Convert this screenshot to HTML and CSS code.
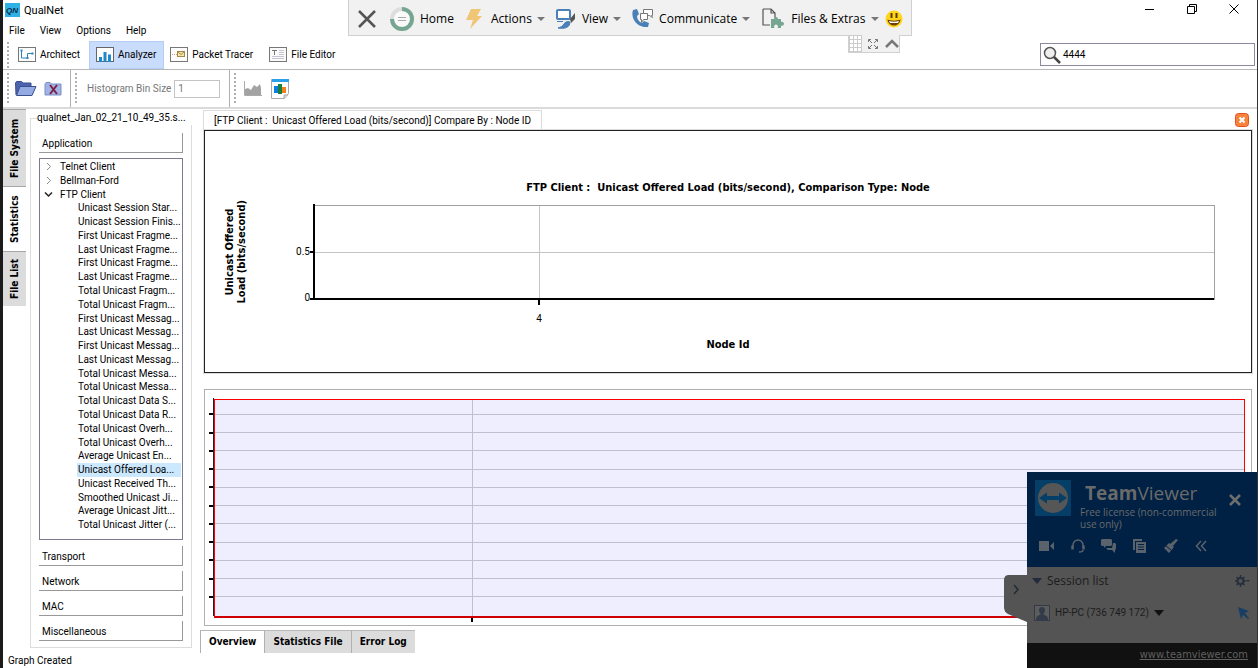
FILE: index.html
```html
<!DOCTYPE html>
<html lang="en">
<head>
<meta charset="utf-8">
<title>QualNet</title>
<link rel="stylesheet" href="styles.css">
</head>
<body>
<div class="app">
  <header class="titlebar">
    <svg class="logo" width="15" height="14" viewBox="0 0 15 14"><rect width="15" height="14" fill="#2fb1e6"/><text class="logo-text" x="1" y="10">QN</text></svg>
    <span class="title">QualNet</span>
    <div class="window-buttons">
      <button aria-label="Minimize"><svg width="12" height="12"><path d="M1 6.5h9" stroke="#000"/></svg></button>
      <button aria-label="Restore"><svg width="12" height="12" fill="none" stroke="#000"><path d="M1.5 3.500h7v7h-7zM3.500 3.500v-2h7v7h-2"/></svg></button>
      <button aria-label="Close"><svg width="12" height="12" stroke="#000"><path d="M1.500 1.500l9 9M10.500 1.500l-9 9"/></svg></button>
    </div>
  </header>
  <nav class="menubar">
    <button>File</button><button>View</button><button>Options</button><button>Help</button>
  </nav>
  <div class="modebar">
    <span class="grip"></span>
    <button class="mode"><svg width="18" height="16" fill="none"><rect x=".5" y=".5" width="17" height="14" fill="#fdfdfd" stroke="#777"/><path d="M3.500 3v8h6M9.500 11V6.500h5" stroke="#2d84bd"/><path d="M2.500 2.500h2v2h-2zM8.500 10h2v2h-2zM13.500 5.500h2v2h-2z" fill="#2d84bd"/></svg>Architect</button>
    <button class="mode mode-on"><svg width="18" height="16"><rect x=".5" y=".5" width="17" height="14" fill="#fdfdfd" stroke="#666"/><path d="M3 10h3v5H3zM7.500 5h3v10h-3zM12 7.500h3V15h-3z" fill="#1e88c9"/></svg>Analyzer</button>
    <button class="mode mode-packet"><svg width="18" height="16" fill="none"><rect x=".5" y=".5" width="17" height="14" fill="#fdfdfd" stroke="#777"/><path d="M2 7.500h5" stroke="#e79a8b" stroke-dasharray="1 1"/><rect x="7.500" y="4.500" width="7" height="5" fill="#f5e6a8" stroke="#a08a4a"/><path d="M8 5l3 2.500L14 5" stroke="#a08a4a"/></svg>Packet Tracer</button>
    <button class="mode mode-editor"><svg width="18" height="16" fill="none"><rect x=".5" y=".5" width="17" height="14" fill="#fafafa" stroke="#777"/><path d="M3 3.500h5M5.500 3v5" stroke="#777"/><path d="M10 3.500h5M10 5.500h5M10 7.500h5M3 9.500h12M3 11.500h12" stroke="#c5c5d5"/></svg>File Editor</button>
    <label class="search">
      <svg width="18" height="18" fill="none"><circle cx="7" cy="7" r="5.500" fill="#eee" stroke="#555" stroke-width="1.500"/><path d="M11 11l6 6" stroke="#444" stroke-width="2.500"/></svg>
      <input type="text" value="4444" aria-label="Search">
    </label>
  </div>
  <div class="toolbar">
    <div class="tools tools-files">
      <span class="grip"></span>
      <button aria-label="Open"><svg width="23" height="18" stroke="#3b4f8f"><path d="M2 15L1.500 3l1-1.500h5L9 3h8v3" fill="#4b64ad"/><path d="M2.500 15.500L6 6.500h16l-4 9z" fill="#94aae2"/></svg></button>
      <button aria-label="Close file"><svg width="18" height="16"><path d="M1 14V3l1-1.500h4L7.500 3H17v11z" fill="#9fb3e6" stroke="#7a8fc8"/><path d="M6 4l7 9M13 4l-7 9" stroke="#7d2043" stroke-width="2"/></svg></button>
    </div>
    <div class="tools tools-bin">
      <span class="grip"></span>
      <label class="bin">Histogram Bin Size <input type="text" value="1" disabled></label>
    </div>
    <div class="tools tools-chart">
      <span class="grip"></span>
      <button aria-label="Area chart"><svg width="19" height="17"><path d="M1.500 1v14.500H19" fill="none" stroke="#aaa"/><path d="M2 15V9l3-1 3 2 3-5 3 2 3-3 1 4v7z" fill="#a3a3a3"/></svg></button>
      <button aria-label="Report"><svg width="19" height="20"><path d="M.5.5h17v14l-4 5H.5z" fill="#fff" stroke="#aaa"/><path d="M1 0h17v3H1z" fill="#2aa0e8"/><path d="M3 7h4v7H3z" fill="#0a7fe0"/><path d="M7 5h4v10H7z" fill="#188038"/><path d="M11 8h4v6h-4z" fill="#f08020"/><path d="M13 19v-3h4" fill="#ddd" stroke="#aaa"/></svg></button>
    </div>
  </div>
  <div class="workspace">
    <nav class="sidetabs">
      <button class="sidetab tab-system">File System</button>
      <button class="sidetab tab-stats sidetab-on">Statistics</button>
      <button class="sidetab tab-list">File List</button>
    </nav>
    <fieldset class="group">
      <legend>qualnet_Jan_02_21_10_49_35.s...</legend>
      <button class="section">Application</button>
      <ul class="tree">
        <li class="node"><svg width="9" height="9"><path d="M3 1l3.500 3.500L3 8"/></svg>Telnet Client</li>
        <li class="node"><svg width="9" height="9"><path d="M3 1l3.500 3.500L3 8"/></svg>Bellman-Ford</li>
        <li class="node node-open"><svg width="9" height="9"><path d="M1 2.500L4.500 6 8 2.500"/></svg>FTP Client</li>
        <li class="leaf">Unicast Session Star...</li>
        <li class="leaf">Unicast Session Finis...</li>
        <li class="leaf">First Unicast Fragme...</li>
        <li class="leaf">Last Unicast Fragme...</li>
        <li class="leaf">First Unicast Fragme...</li>
        <li class="leaf">Last Unicast Fragme...</li>
        <li class="leaf">Total Unicast Fragm...</li>
        <li class="leaf">Total Unicast Fragm...</li>
        <li class="leaf">First Unicast Messag...</li>
        <li class="leaf">Last Unicast Messag...</li>
        <li class="leaf">First Unicast Messag...</li>
        <li class="leaf">Last Unicast Messag...</li>
        <li class="leaf">Total Unicast Messa...</li>
        <li class="leaf">Total Unicast Messa...</li>
        <li class="leaf">Total Unicast Data S...</li>
        <li class="leaf">Total Unicast Data R...</li>
        <li class="leaf">Total Unicast Overh...</li>
        <li class="leaf">Total Unicast Overh...</li>
        <li class="leaf">Average Unicast En...</li>
        <li class="leaf leaf-on">Unicast Offered Loa...</li>
        <li class="leaf">Unicast Received Th...</li>
        <li class="leaf">Smoothed Unicast Ji...</li>
        <li class="leaf">Average Unicast Jitt...</li>
        <li class="leaf">Total Unicast Jitter (...</li>
      </ul>
      <button class="section">Transport</button>
      <button class="section">Network</button>
      <button class="section">MAC</button>
      <button class="section">Miscellaneous</button>
    </fieldset>
    <main class="main">
      <div class="chart-tabs">
        <button class="chart-tab">[FTP Client :&nbsp; Unicast Offered Load (bits/second)] Compare By : Node ID</button>
        <button class="chart-close" aria-label="Close chart"><svg width="14" height="14"><rect x=".5" y=".5" width="13" height="13" rx="3" fill="#f8833c" stroke="#e8501a"/><path d="M4.500 4.500l5 5M9.500 4.500l-5 5" stroke="#fff" stroke-width="2"/></svg></button>
      </div>
      <section class="chart">
        <h2 class="chart-title">FTP Client :&nbsp; Unicast Offered Load (bits/second), Comparison Type: Node</h2>
        <div class="y-title">Unicast Offered<br>Load (bits/second)</div>
        <svg class="plot">
          <g stroke="#c4c4c4"><line x1="25%" x2="25%" y1="0" y2="100%"/><line x1="0" x2="100%" y1="50%" y2="50%"/></g>
          <rect width="100%" height="100%" fill="none" stroke="#a0a0a0"/>
          <g stroke="#000" stroke-width="2"><line x1="0" x2="0" y1="-1" y2="100%"/><line x1="0" x2="100%" y1="100%" y2="100%"/><line x1="-4" x2="0" y1="50%" y2="50%"/><line x1="-4" x2="0" y1="100%" y2="100%"/></g>
          <svg x="25%" y="100%" class="tick"><path d="M0 0v6" stroke="#000" stroke-width="2"/></svg>
          <text x="0" y="50%" dx="-4" dy="3" text-anchor="end">0.5</text>
          <text x="0" y="100%" dx="-4" dy="2" text-anchor="end">0</text>
          <text x="25%" y="100%" dy="23" text-anchor="middle">4</text>
        </svg>
        <div class="x-title">Node Id</div>
      </section>
      <section class="overview">
        <svg class="plot plot-framed">
          <g stroke="#c0c0cc"><line x2="100%" y1="6.700%" y2="6.700%"/><line x2="100%" y1="15.100%" y2="15.100%"/><line x2="100%" y1="23.600%" y2="23.600%"/><line x2="100%" y1="32%" y2="32%"/><line x2="100%" y1="40.500%" y2="40.500%"/><line x2="100%" y1="48.900%" y2="48.900%"/><line x2="100%" y1="57.300%" y2="57.300%"/><line x2="100%" y1="65.800%" y2="65.800%"/><line x2="100%" y1="74.200%" y2="74.200%"/><line x2="100%" y1="82.700%" y2="82.700%"/><line x2="100%" y1="91.100%" y2="91.100%"/><line x1="25%" x2="25%" y2="100%"/></g>
          <g stroke="#000" stroke-width="2"><line x1="-6" x2="-1" y1="6.700%" y2="6.700%"/><line x1="-6" x2="-1" y1="15.100%" y2="15.100%"/><line x1="-6" x2="-1" y1="23.600%" y2="23.600%"/><line x1="-6" x2="-1" y1="32%" y2="32%"/><line x1="-6" x2="-1" y1="40.500%" y2="40.500%"/><line x1="-6" x2="-1" y1="48.900%" y2="48.900%"/><line x1="-6" x2="-1" y1="57.300%" y2="57.300%"/><line x1="-6" x2="-1" y1="65.800%" y2="65.800%"/><line x1="-6" x2="-1" y1="74.200%" y2="74.200%"/><line x1="-6" x2="-1" y1="82.700%" y2="82.700%"/><line x1="-6" x2="-1" y1="91.100%" y2="91.100%"/></g>
          <svg x="25%" y="100%" class="tick"><path d="M0 2v4" stroke="#000" stroke-width="2"/></svg>
          <line x1="-1.500" x2="-1.500" y1="-2" y2="100%" stroke="#222"/>
        </svg>
      </section>
      <nav class="bottom-tabs">
        <button class="bottom-tab bottom-on">Overview</button>
        <button class="bottom-tab">Statistics File</button>
        <button class="bottom-tab">Error Log</button>
      </nav>
    </main>
  </div>
  <footer class="status">Graph Created</footer>
</div>

<div class="remote">
  <div class="remote-bar">
    <button aria-label="Close session"><svg width="20" height="20" stroke="#555" stroke-width="2.500"><path d="M2 2l16 16M18 2L2 18"/></svg></button>
    <button class="r-home"><svg width="26" height="26" fill="none"><circle cx="13" cy="13" r="10" fill="#fafafa" stroke="#ddd" stroke-width="4"/><path d="M13 3a10 10 0 1 1-10 10" stroke="#76a692" stroke-width="4"/><path d="M9 11.500h8M9 14.500h8" stroke="#aaa"/></svg>Home</button>
    <button class="r-actions"><svg width="16" height="20"><path d="M5 0h10l-4 7h5L4 20l3-9H0z" fill="#f0c575"/></svg>Actions<i class="caret"></i></button>
    <button class="r-view"><svg width="22" height="20" fill="none"><rect x="2" y="1" width="13" height="9" rx="1" fill="#fff" stroke="#4a80b8" stroke-width="2"/><path d="M15 10l5-6v6l-4 4z" fill="#555"/><path d="M2 12.500h6M3 19c6 1 12 0 12-6-3-1-5 0-6 2s-3 3-6 4z" fill="#4a80b8" stroke="#4a80b8"/></svg>View<i class="caret"></i></button>
    <button class="r-comm"><svg width="23" height="21" fill="none"><path d="M2 2c-3 9 5 18 15 17l1-4-5-2-2 2c-3-1-5-4-5-7l2-2-2-5z" fill="#4a80b8"/><path d="M12.500 1.500h9v6h-1l1 2-3-2h-6z" fill="#fff" stroke="#777"/><path d="M9.500 5.500h7v6h-4l-2 3v-3h-1z" fill="#fff" stroke="#777"/></svg>Communicate<i class="caret"></i></button>
    <button class="r-files"><svg width="24" height="21" fill="none"><path d="M1 1h8l4 4v5M1 1v16h7M9 1v4h4" stroke="#555" stroke-width="1.200"/><path d="M9 20v-9h3a2 2 0 1 1 4 0h3v3a2 2 0 1 1 0 3.500V20h-3.500a2 2 0 1 0-3 0z" fill="#76a692"/></svg>Files &amp; Extras<i class="caret"></i></button>
    <button class="r-smile" aria-label="Feedback"><svg width="18" height="18"><circle cx="9" cy="9" r="8.500" fill="#ffd51c"/><path d="M6.500 3v5M11.500 3v5" stroke="#5a3a00" stroke-width="2"/><path d="M2.500 9.500c3 1.500 10 1.500 13 0-1 8-12 8-13 0z" fill="#6b4100"/><path d="M4 11c3 1 7 1 10 0l-1 2H5z" fill="#fff"/></svg></button>
  </div>
  <div class="remote-sub">
    <span class="dots"></span>
    <button aria-label="Full screen"><svg width="12" height="12" fill="none" stroke="#777"><path d="M1.500 4V1.500H4M8 1.500h2.500V4M10.500 8v2.500H8M4 10.500H1.500V8M2 2l3 3M10 2L7 5M10 10L7 7M2 10l3-3"/></svg></button>
    <button aria-label="Collapse"><svg width="16" height="10" fill="none" stroke="#777" stroke-width="2.500"><path d="M2 8l6-6 6 6"/></svg></button>
  </div>
</div>

<aside class="tv">
  <button class="tv-handle" aria-label="Collapse panel"><svg width="23" height="47" fill="none"><path d="M23 0H5Q0 0 0 5v27q0 5 4 7l19 8z" fill="#545454"/><path d="M10 10l4 4.500-4 4.500" stroke="#222a33" stroke-width="1.500"/></svg></button>
  <div class="tv-head">
    <svg class="tv-logo" width="36" height="36"><rect width="36" height="36" rx="1" fill="#053f68"/><circle cx="18" cy="18" r="15" fill="#565656"/><path d="M4 18l8-5.500v3.500h12v-3.500l8 5.500-8 5.500V20H12v3.500z" fill="#053f68"/></svg>
    <div class="tv-name"><h1><b>Team</b>Viewer</h1><p>Free license (non-commercial use only)</p></div>
    <button class="tv-close" aria-label="Close"><svg width="12" height="12" stroke="#6e6e6e" stroke-width="2.500"><path d="M1 1l10 10M11 1L1 11"/></svg></button>
    <div class="tv-tools">
      <button aria-label="Video"><svg width="16" height="14" fill="#5a626b"><path d="M0 2h10v10H0zM11 7l4-4v8z"/></svg></button>
      <button aria-label="Audio"><svg width="16" height="14" fill="none" stroke="#5a626b" stroke-width="1.500"><path d="M3 8V6a5 5 0 0 1 10 0v2M13 11c0 2-2 2-4 2"/><path d="M2.500 6.500v4M13.500 6.500v4" stroke-width="2.500"/></svg></button>
      <button aria-label="Chat"><svg width="16" height="14" fill="#5a626b"><path d="M1 0h9l1 1v5l-1 1H5L3 9V7H1L0 6V1zM12 4h2l1 1v5l-1 1v3l-3-3H7L5 9h6z"/></svg></button>
      <button aria-label="Files"><svg width="16" height="14" fill="#5a626b"><path d="M1 0h9v2H3v9H1z"/><path d="M4 3h10v11H4z"/><path d="M6 5.500h6M6 8h6M6 10.500h6" stroke="#002144"/></svg></button>
      <button aria-label="Whiteboard"><svg width="16" height="14" fill="#5a626b"><path d="M13 0l2 1-5 6-3-2zM6 4l5 4-5 6-5-5z"/><path d="M3 7l5 4" stroke="#002144"/></svg></button>
      <button aria-label="Less"><svg width="16" height="14" fill="none" stroke="#5a626b" stroke-width="1.500"><path d="M7 2L2.500 7 7 12M12 2L7.500 7l4.500 5"/></svg></button>
    </div>
  </div>
  <div class="tv-body">
    <div class="tv-row"><i class="tri tri-blue"></i><span class="tv-list">Session list</span><button aria-label="Settings"><svg width="15" height="12"><circle cx="5.500" cy="6" r="3" fill="none" stroke="#26303c" stroke-width="2"/><path d="M5.500 0v3M5.500 9v3M0 6h3M8 6h3M1.500 2l2 2M7.500 8l2 2M9.500 2l-2 2M3.500 8l-2 2" stroke="#26303c" stroke-width="1.500"/><path d="M11 5h4l-2 2z" fill="#26303c"/></svg></button></div>
    <div class="tv-row tv-peer"><svg width="16" height="16"><rect x=".5" y=".5" width="15" height="15" fill="#5c5c5c" stroke="#333a48"/><path d="M5 5c0-4 6-4 6 0 0 2-1 4-2 4.500 3 1 5 1.500 5 5.500H2c0-4 2-4.500 5-5.500C6 9 5 7 5 5z" fill="#333a48"/></svg><span>HP-PC (736 749 172)</span><i class="tri"></i><button aria-label="Pointer"><svg width="12" height="12" fill="#173f63"><path d="M0 0l11 4-4 2 4 5-1 1-5-4-2 4z"/></svg></button></div>
  </div>
  <div class="tv-foot"><a href="#">www.teamviewer.com</a></div>
</aside>
</body>
</html>
```
FILE: styles.css
```css
* { box-sizing: border-box; }
body { margin: 0; background: #fff; color: #000; font: 10px/14px Roboto, sans-serif; }
button { font: inherit; color: inherit; background: none; border: 0; padding: 0; margin: 0; display: flex; align-items: center; white-space: nowrap; }
input { font: inherit; color: inherit; min-width: 0; }
svg { display: block; flex: none; }
h1, h2, p, ul { margin: 0; padding: 0; }

.app { min-height: 100vh; display: flex; flex-direction: column; border-left: 3px solid #1b1b1b; border-right: 1px solid #333; }
.titlebar { display: flex; align-items: flex-start; height: 22px; padding: 3px 17px 0 2px; }
.logo-text { font: italic bold 8px "Liberation Sans", sans-serif; fill: #0b2a4a; }
.title { margin-left: 4px; font-size: 11px; line-height: 16px; }
.window-buttons { margin-left: auto; display: flex; gap: 30px; }
.menubar { display: flex; gap: 15px; height: 18px; padding-left: 6px; }

.modebar { display: flex; align-items: center; height: 30px; padding: 0 2px 0 4px; border-bottom: 1px solid #b8b8b8; }
.grip { flex: none; width: 2px; height: 26px; background: repeating-linear-gradient(#b0b0b0 0 2px, transparent 2px 4px); }
.mode { gap: 4px; height: 28px; padding: 1px 9px 0; }
.mode-on { background: #c9dcfb; border: 1px solid #b4cdf5; padding: 0 7px 0 6px; }
.mode-packet { padding: 1px 7px 0 6px; }
.search { display: flex; align-items: center; gap: 2px; width: 215px; height: 23px; margin-left: auto; padding: 0 2px; border: 1px solid #8a8aa0; }
.search input { flex: 1; border: 0; padding: 0; outline: 0; }

.toolbar { display: flex; height: 39px; border-bottom: 2px solid #dadada; }
.tools { display: flex; align-items: center; gap: 7px; padding-left: 4px; border-right: 1px solid #b0b0b0; }
.tools .grip { height: 32px; margin-right: -2px; }
.tools-files { width: 68px; }
.tools-bin { width: 159px; }
.tools-chart { border: 0; gap: 9px; }
.bin { display: flex; align-items: center; gap: 3px; margin-left: 5px; color: #777; white-space: nowrap; }
.bin input { width: 46px; height: 18px; padding: 0 3px; background: #fff; border: 1px solid #c4c4c4; color: #777; }

.workspace { flex: 1; display: flex; }
.sidetabs { width: 23px; }
.sidetab { width: 23px; justify-content: center; writing-mode: vertical-rl; transform: rotate(180deg); background: #dcdcdc; border-bottom: 1px solid #a8a8a8; font: bold 10px/14px "DejaVu Sans Condensed", "DejaVu Sans", sans-serif; }
.tab-system { height: 77px; }
.tab-stats { height: 65px; }
.tab-list { height: 55px; }
.sidetab-on { background: #fff; }

.group { display: flex; flex-direction: column; gap: 6px; width: 162px; min-width: 0; margin: 2px 0 5px 4px; padding: 8px 8px 7px; border: 1px solid #dcdcdc; }
.group legend { margin-left: -2px; padding: 0; width: 155px; white-space: nowrap; }
.section { height: 20px; padding: 2px 0 0 3px; border-right: 1px solid #999; border-bottom: 1px solid #999; margin-bottom: -1px; }
.tree { flex: 1; display: grid; grid-auto-rows: 1fr; grid-template-columns: minmax(0, 1fr); padding: 1px 1px 7px; border: 1px solid #7a7a90; list-style: none; }
.tree li { line-height: 13px; white-space: nowrap; min-height: 0; }
.node { display: flex; align-items: center; gap: 7px; padding-left: 3px; }
.node path { fill: none; stroke: #888; }
.node-open path { stroke: #222; stroke-width: 1.5; }
.leaf { margin-left: 36px; padding-left: 1px; }
.leaf-on { background: #cce8ff; }

.main { flex: 1; min-width: 0; display: flex; flex-direction: column; padding: 1px 5px 0 9px; }
.chart-tabs { display: flex; align-items: center; justify-content: space-between; height: 20px; margin-left: 2px; padding-right: 3px; }
.chart-tab { height: 20px; padding: 0 10px; border: 1px solid #dcdcdc; border-bottom: 0; }
.chart, .overview { margin-left: 3px; min-height: 0; }
.chart { flex: 241 1 0; display: grid; grid-template: 74px minmax(0, 1fr) 73px / 109px minmax(0, 1fr) 37px; border: 1px solid #222; outline: 1px solid #dcdcdc; }
.chart-title { grid-column: 1 / 4; align-self: end; padding-bottom: 10px; text-align: center; }
.chart-title, .x-title, .y-title { font: bold 11px/14px "DejaVu Sans Condensed", "DejaVu Sans", sans-serif; }
.y-title { writing-mode: vertical-rl; transform: rotate(180deg); place-self: center; margin-right: 47px; line-height: 12px; text-align: center; white-space: nowrap; }
.plot { width: 100%; height: 100%; min-height: 0; overflow: visible; shape-rendering: crispEdges; }
.plot-framed { background: #eeeeff; border: 1px solid #f00; border-bottom: 2px solid #c00; }
.tick { overflow: visible; }
.x-title { grid-column: 1 / 4; grid-row: 3; align-self: end; padding-bottom: 20px; text-align: center; }
.overview { flex: 219 1 0; margin-top: 16px; padding: 9px 6px 7px 9px; border: 1px solid #b0b0b0; }
.bottom-tabs { display: flex; margin: 4px 0 0 -1px; }
.bottom-tab { height: 23px; padding: 0 8px; background: #dcdcdc; border-top: 1px solid #b8b8b8; border-left: 1px solid #b0b0b0; font: bold 10px/14px "DejaVu Sans Condensed", "DejaVu Sans", sans-serif; }
.bottom-on { background: #fff; }
.status { height: 15px; padding: 1px 0 0 5px; }

.remote { position: absolute; top: 0; left: 348px; width: 564px; font: 12px/18px "Open Sans", sans-serif; }
.remote-bar { display: flex; align-items: center; height: 36px; padding: 2px 8px 0; background: #f1f1f1; border: 1px solid #d0d0d0; border-top: 0; }
.remote-bar button { gap: 5px; }
.r-home, .r-actions, .r-files { margin-left: 12px; }
.r-view, .r-comm { margin-left: 10px; }
.r-actions svg { margin-right: 4px; }
.remote-bar .r-smile { margin-left: auto; }
.caret { border: 4px solid transparent; border-top-color: #777; border-bottom: 0; }
.remote-sub { display: flex; align-items: center; gap: 5px; width: 52px; height: 18px; margin: -1px 12px 0 auto; background: #f1f1f1; border: 1px solid #d0d0d0; border-top: 0; }
.dots { flex: none; width: 13px; height: 17px; background: repeating-linear-gradient(90deg, #ccc 0 1px, transparent 1px 4px), repeating-linear-gradient(#ccc 0 1px, #fff 1px 4px); }

.tv { position: fixed; right: 1px; bottom: 0; width: 230px; background: #545454; color: #1c1c1c; }
.tv-handle { position: absolute; left: -23px; top: 103px; }
.tv-head { display: grid; grid-template: 54px 1fr / 36px 1fr 14px; column-gap: 9px; height: 95px; padding: 8px 14px 0 8px; background: #002144; color: #6a6a6a; }
.tv-name h1 { font: 19px/26px "Open Sans", sans-serif; padding-left: 5px; }
.tv-name p { font: 10px/12px "Open Sans", sans-serif; white-space: normal; }
.tv-close { align-self: start; padding-top: 14px; }
.tv-tools { grid-column: 1 / 4; display: flex; align-items: flex-start; gap: 15px; padding: 5px 0 0 4px; }
.tv-body { height: 76px; padding: 5px 7px 0 5px; }
.tv-row { display: flex; align-items: center; height: 18px; gap: 5px; }
.tv-row button { margin-left: auto; }
.tv-list { font: 12px/18px "Open Sans", sans-serif; }
.tv-peer { margin-top: 14px; padding-left: 2px; }
.tri { border: 5px solid transparent; border-top: 6px solid #111; border-bottom: 0; }
.tri-blue { border-top-color: #222a3c; }
.tv-foot { height: 25px; padding: 5px 9px 0; background: #111; text-align: right; }
.tv-foot a { color: #606060; font: 11px/14px "DejaVu Sans Condensed", "DejaVu Sans", sans-serif; }
```
